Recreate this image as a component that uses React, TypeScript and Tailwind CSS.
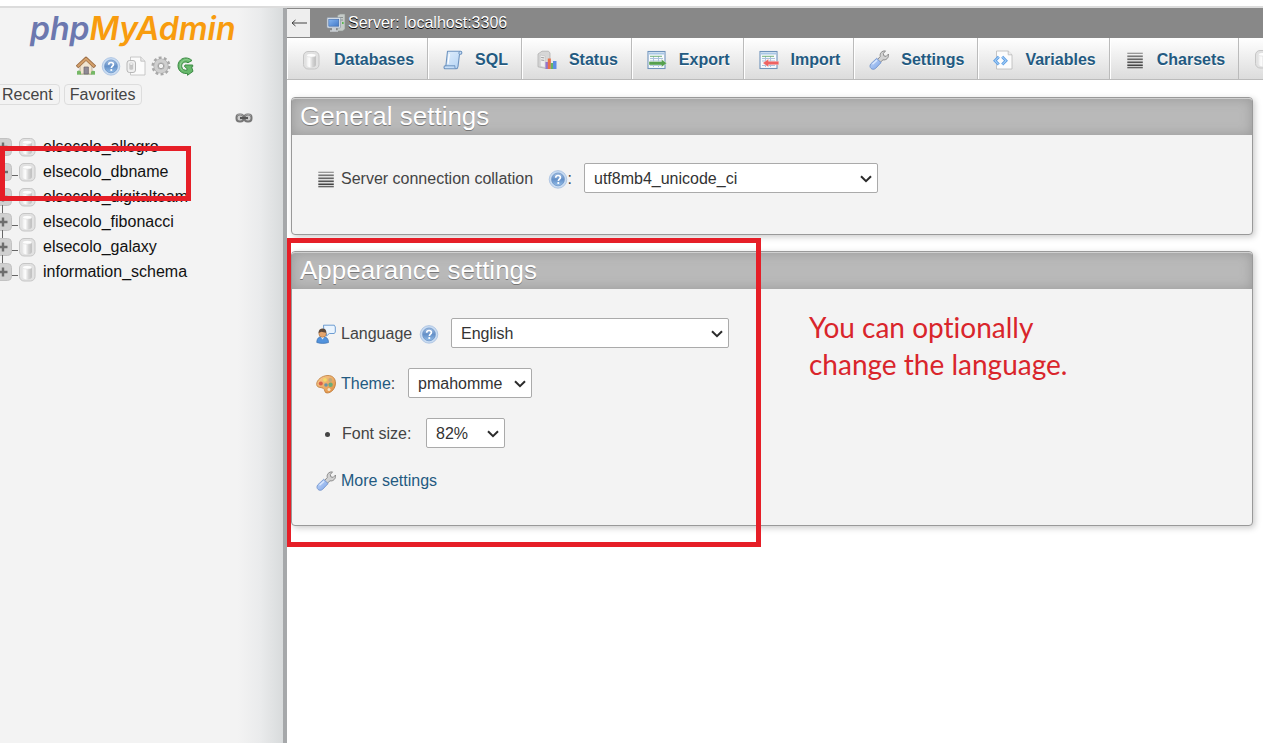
import type { ReactNode, SelectHTMLAttributes } from "react";

function Svg({ children, className = "h-5 w-5" }: { children: ReactNode; className?: string }) {
  return (
    <svg viewBox="0 0 20 20" className={`${className} shrink-0`} fill="none" aria-hidden="true">
      {children}
    </svg>
  );
}

function SharedGradients() {
  return (
    <svg className="absolute h-0 w-0" aria-hidden="true">
      <defs>
        <linearGradient id="cyl" x1="0" x2="1" y1="0" y2="0">
          <stop offset="0" stopColor="#ececec" />
          <stop offset=".3" stopColor="#fdfdfd" />
          <stop offset=".65" stopColor="#d4d4d4" />
          <stop offset="1" stopColor="#bdbdbd" />
        </linearGradient>
        <linearGradient id="helpFill" x1="0" x2="0" y1="0" y2="1">
          <stop offset="0" stopColor="#a3bfe3" />
          <stop offset=".5" stopColor="#6490c8" />
          <stop offset="1" stopColor="#93bde8" />
        </linearGradient>
        <linearGradient id="handle" x1="0" x2="1" y1="0" y2="1">
          <stop offset="0" stopColor="#c3d9fb" />
          <stop offset="1" stopColor="#7ea4e6" />
        </linearGradient>
        <linearGradient id="sheet" x1="0" x2="1" y1="0" y2="1">
          <stop offset="0" stopColor="#e2effc" />
          <stop offset="1" stopColor="#b2d2f4" />
        </linearGradient>
        <linearGradient id="palette" x1="0" x2="1" y1="0" y2="1">
          <stop offset="0" stopColor="#f9cf94" />
          <stop offset="1" stopColor="#e08c3c" />
        </linearGradient>
        <linearGradient id="screen" x1="0" x2="1" y1="0" y2="1">
          <stop offset="0" stopColor="#86b5f0" />
          <stop offset="1" stopColor="#4279c8" />
        </linearGradient>
      </defs>
    </svg>
  );
}

const DatabaseIcon = () => (
  <Svg>
    <rect x="1.500" y="1.500" width="15.500" height="17.500" rx="4.500" fill="#e2e2e2" stroke="#c6c6c6" strokeWidth="1" />
    <path d="M4.500 5.300v9.700c0 1.600 2.200 2.400 4.700 2.400s4.700-.8 4.700-2.400V5.300z" fill="url(#cyl)" />
    <ellipse cx="9.200" cy="5.300" rx="4.700" ry="1.900" fill="#fdfdfd" stroke="#d4d4d4" strokeWidth=".5" />
  </Svg>
);

const HomeIcon = () => (
  <Svg>
    <path d="M1 15.500h18v2.800H1z" fill="#5da356" />
    <path d="M4 9l6-6 6 6v9H4z" fill="#f0e4d0" stroke="#a98e6c" strokeWidth=".6" />
    <path d="M8 11h4.400v7H8z" fill="#8f8a94" stroke="#6b6470" strokeWidth=".7" />
    <path d="M1 11l9-8.500 9 8.500" stroke="#9a6a42" strokeWidth="3.600" strokeLinejoin="round" />
    <path d="M1.600 10.600L10 2.800l8.400 7.800" stroke="#d3a06a" strokeWidth="2" strokeLinejoin="round" />
    <path d="M1 15.500c1.500-1.500 3-1 4 .6v2.400H1zM15 16c1-1.500 3-1.500 4-.5v3h-4z" fill="#76b866" />
  </Svg>
);

const HelpIcon = () => (
  <Svg>
    <circle cx="10" cy="10.400" r="8.800" fill="#c9dcf2" stroke="#9db9dc" strokeWidth=".7" />
    <circle cx="10" cy="10.400" r="6.400" fill="url(#helpFill)" stroke="#6f95c6" strokeWidth=".8" />
    <path d="M7.700 8.700c0-1.500 1.100-2.200 2.400-2.200s2.300.8 2.300 1.900c0 1.700-2 1.700-2 3.500" stroke="#fff" strokeWidth="1.700" />
    <circle cx="10.300" cy="14" r="1.100" fill="#fff" />
  </Svg>
);

const DocsIcon = () => (
  <Svg>
    <path d="M4.500 1h10.300l4.200 4.200V19H4.500z" fill="#fbfbfb" stroke="#bcbcbc" strokeWidth=".8" />
    <path d="M14.800 1v4.200H19" fill="#e8e8e8" stroke="#bcbcbc" strokeWidth=".8" />
    <rect x="1" y="4.500" width="8.500" height="12" rx="2.500" fill="#efefef" stroke="#b0b0b0" strokeWidth=".9" />
    <path d="M3.300 8v4.800c0 1.400 3.900 1.400 3.900 0V8z" fill="#c6c6c6" />
    <ellipse cx="5.250" cy="8" rx="1.950" ry="1" fill="#fff" stroke="#b5b5b5" strokeWidth=".5" />
  </Svg>
);

const GearIcon = () => (
  <Svg>
    <circle cx="10" cy="10" r="8" stroke="#a8a8a8" strokeWidth="3" strokeDasharray="2.800 2.230" />
    <circle cx="10" cy="10" r="5.200" stroke="#ababab" strokeWidth="4.800" />
    <circle cx="10" cy="10" r="5.200" stroke="#cfcfcf" strokeWidth="3.400" />
    <circle cx="10" cy="10" r="2.700" fill="#f3f3f3" stroke="#999" strokeWidth=".9" />
  </Svg>
);

const ReloadIcon = () => (
  <Svg>
    <path d="M16 4.500C12.500 1.200 7.500 1.200 4.500 4 .8 7.500 1.300 13.500 5.500 16.200c2 1.300 4.200 1.500 6 1.200v1.900l5.500-4-1.500-4.600h1.200V9H9l-.5 1.500 2.500 2v1.700c-2.500.5-5-1-5.300-3.700-.4-3.500 3.200-5.500 6.300-3.800z" fill="#67b86b" stroke="#3b8a43" strokeWidth="1" strokeLinejoin="round" />
    <path d="M13.800 4.500c-3-1.500-6.300-1-8.300 1.500-2 2.600-1.600 6.300.8 8.400" stroke="#97d398" strokeWidth="1" />
  </Svg>
);

const ServerIcon = () => (
  <Svg>
    <path d="M11.500 2.500L14 1h5v15l-2.500 2h-5z" fill="#c5cbc8" stroke="#8d9492" strokeWidth=".6" />
    <path d="M13 4.500h4M13 7h4" stroke="#8b9391" />
    <rect x="16" y="9" width="1.600" height="2" fill="#58b84e" />
    <rect x="1" y="4.500" width="13.500" height="10.500" rx="1" fill="#dfe6ee" stroke="#8c98a6" strokeWidth=".7" />
    <rect x="2.800" y="6.200" width="10" height="7" fill="url(#screen)" stroke="#3c64a0" strokeWidth=".6" />
    <path d="M6 15h4v2.200h2v1.600H4v-1.600h2z" fill="#c9ced4" />
  </Svg>
);

const SqlIcon = () => (
  <Svg>
    <path d="M4.500 1.200h13c1.700 0 1.900 2.900 0 3.100H16.500L15 16.500c-.2 1.500-1 2.300-2 2.300H2.300C.6 18.800.6 15.800 2.300 15.800h.6z" fill="url(#sheet)" stroke="#6d93bf" strokeWidth="1.100" strokeLinejoin="round" />
    <path d="M2.300 15.800h9.700c-.4 1.200 0 2.600.9 3M16.500 4.300c-1-.5-.8-2.500.6-3" stroke="#6d93bf" strokeWidth="1" />
    <path d="M6.300 4L5 14" stroke="#fff" strokeWidth="1.200" />
  </Svg>
);

const StatusIcon = () => (
  <Svg>
    <path d="M1 4l4-2.800h6.500L13 3v13.500l-4 2-8-1.700z" fill="#d7d7d7" stroke="#a9a9a9" strokeWidth=".7" />
    <path d="M3.200 5v11.500l5 1V6z" fill="#efefef" stroke="#b8b8b8" strokeWidth=".5" />
    <path d="M4.200 7.500l3 .4M4.200 10l3 .4" stroke="#9a9a9a" />
    <rect x="8.500" y="12" width="3" height="7" fill="#9474cc" />
    <rect x="10.800" y="8.500" width="3" height="10.500" fill="#ea7049" />
    <rect x="13.800" y="13" width="2.700" height="6" fill="#64b665" />
    <rect x="16" y="11" width="3.500" height="8" fill="#5d8de4" />
  </Svg>
);

const TableBase = () => (
  <>
    <rect x="1" y="1.500" width="17" height="17" fill="#f7fafd" stroke="#6f93bb" strokeWidth="1.100" />
    <path d="M1.500 3.500h16" stroke="#a9c7e5" strokeWidth="2" />
    <path d="M3 8.500h13M3 11h13M3 15.500h13M6.500 6v11M11.500 6v11" stroke="#abc2dc" strokeWidth="1" />
    <path d="M3 6.300h12" stroke="#74b278" strokeWidth="1" />
  </>
);

const ExportIcon = () => (
  <Svg>
    <TableBase />
    <path d="M2 11.500h12.500V9.300l5.300 3.900-5.300 3.900v-2.100H2z" fill="#55a04e" stroke="#f2f8f1" strokeWidth=".4" />
  </Svg>
);

const ImportIcon = () => (
  <Svg>
    <TableBase />
    <path d="M19.800 11.300H9.500V9l-5.700 4 5.700 4v-2.300h10.300z" fill="#ee6262" stroke="#fbe8e8" strokeWidth=".4" />
  </Svg>
);

const WrenchIcon = () => (
  <Svg>
    <path d="M8.500 9.500l2.800-3C10.500 3.300 12.800.6 16.500.9L14.300 3.500l.6 2.400 2.300.5L19.500 4c.6 3.800-2.400 6.500-5.500 5.800l-3.200 3z" fill="#d2d2d2" stroke="#8b8b8b" strokeWidth="1" strokeLinejoin="round" />
    <path d="M7.700 8.300l4.400 4.300-5.400 5.700c-3.200 3-7.700-1.200-4.800-4.600z" fill="url(#handle)" stroke="#6b8dc8" strokeWidth=".8" />
    <path d="M3.500 14.300l4.500-4" stroke="#dbe8fd" strokeWidth="1.500" />
  </Svg>
);

const VariablesIcon = () => (
  <Svg>
    <path d="M3.500 1h11.700L19 4.800V19H3.500z" fill="#fcfcfc" stroke="#b9b9b9" strokeWidth=".8" />
    <path d="M15.200 1v3.800H19" fill="#eee" stroke="#b9b9b9" strokeWidth=".8" />
    <path d="M5.800 6.800L2 10.700l3.800 3.900M9.200 6.800l3.800 3.900-3.800 3.900" stroke="#5b9ce2" strokeWidth="2.800" />
    <path d="M5.800 6.800L2 10.700l3.800 3.900M9.200 6.800l3.800 3.900-3.800 3.900" stroke="#a3cdf6" strokeWidth="1.100" />
  </Svg>
);

const CharsetIcon = () => (
  <Svg>
    <path d="M2.300 3.300h15.500" stroke="#8f8f8f" strokeWidth="1.200" />
    <path d="M2.300 6.300h15.500" stroke="#777" strokeWidth="1.700" />
    <path d="M2.300 9.300h15.500" stroke="#666" strokeWidth="1.700" />
    <path d="M2.300 12.300h15.500" stroke="#555" strokeWidth="1.700" />
    <path d="M2.300 15.300h15.500" stroke="#444" strokeWidth="1.700" />
    <path d="M2.300 17.700h15.500" stroke="#555" strokeWidth="1.200" />
  </Svg>
);

const LanguageIcon = () => (
  <Svg>
    <path d="M7.500 1.200h10.800L19.300 3v5l-1 1.500h-5L10.500 12V9.500H8z" fill="#eaf4fe" stroke="#5f93cd" strokeWidth=".9" />
    <path d="M.8 18.500c0-4 2-6 5.700-6s6 2 6 6c-3.500 1.200-8 1.200-11.700 0z" fill="#5293dd" stroke="#3a6fae" strokeWidth=".7" />
    <path d="M4.500 12.500l2 3 2.200-3z" fill="#e6f0fb" />
    <circle cx="6.500" cy="9.500" r="3.700" fill="#e5a56d" stroke="#9a6437" strokeWidth=".5" />
    <path d="M2.500 9c0-3.200 1.900-4.500 4.200-4.500 2.200 0 3.800 1.500 3.700 4.300C8.200 8.300 6.700 7.800 5.500 7.700z" fill="#5a473a" />
  </Svg>
);

const ThemeIcon = () => (
  <Svg>
    <path d="M12 1.500c5 0 7.500 3.300 7.500 7.500 0 5.500-4 10-8.500 10-3 0-1.500-3.500-4-4.800C4.500 13 1 14 .7 10.500.4 6 6 1.500 12 1.500z" fill="url(#palette)" stroke="#bd7a39" strokeWidth=".8" />
    <circle cx="4.800" cy="9.500" r="2" fill="#d9604a" />
    <circle cx="9" cy="5.800" r="1.900" fill="#f1dc67" />
    <circle cx="14.300" cy="6" r="1.900" fill="#c2a97a" />
    <circle cx="10" cy="11" r="1.800" fill="#6a93a8" />
    <circle cx="14.600" cy="10.800" r="2.200" fill="#6bab79" />
    <circle cx="13" cy="15.500" r="1.500" fill="#f7e3c5" />
  </Svg>
);

const LinkIcon = () => (
  <svg viewBox="0 0 18 10" className="h-2.5 w-[18px]" fill="none" aria-hidden="true">
    <rect x="1.500" y="1.500" width="7" height="7" rx="3" fill="#ccc" stroke="#777" strokeWidth="2" />
    <rect x="9.500" y="1.500" width="7" height="7" rx="3" fill="#ccc" stroke="#777" strokeWidth="2" />
    <path d="M5 5h8" stroke="#555" strokeWidth="2.200" />
    <path d="M2 2.500C3 1 6 1 8 2.500M10 2.500c1-1.500 4-1.500 6 0" stroke="#b5b5b5" strokeWidth=".7" />
  </svg>
);

const ExpandIcon = ({ open }: { open: boolean }) => (
  <svg viewBox="0 0 18 18" className="h-[18px] w-[18px]" fill="none" aria-hidden="true">
    <rect x=".5" y=".5" width="17" height="17" rx="4" fill="#d0d0d0" stroke="#c2c2c2" />
    <path d={open ? "M4 9h10" : "M4.500 9h9M9 4.500v9"} stroke="#6e6e6e" strokeWidth="2.400" />
  </svg>
);

const databases = [
  "elsecolo_allegro",
  "elsecolo_dbname",
  "elsecolo_digitalteam",
  "elsecolo_fibonacci",
  "elsecolo_galaxy",
  "information_schema",
];

const shortcuts = [
  { label: "Home", icon: <HomeIcon /> },
  { label: "Documentation", icon: <HelpIcon /> },
  { label: "MySQL documentation", icon: <DocsIcon /> },
  { label: "Navigation settings", icon: <GearIcon /> },
  { label: "Reload", icon: <ReloadIcon /> },
];

const tabs = [
  { label: "Databases", icon: <DatabaseIcon /> },
  { label: "SQL", icon: <SqlIcon /> },
  { label: "Status", icon: <StatusIcon /> },
  { label: "Export", icon: <ExportIcon /> },
  { label: "Import", icon: <ImportIcon /> },
  { label: "Settings", icon: <WrenchIcon /> },
  { label: "Variables", icon: <VariablesIcon /> },
  { label: "Charsets", icon: <CharsetIcon /> },
];

function Sidebar() {
  return (
    <aside className="w-[287px] shrink-0 border-r-4 border-[#a6a8aa] bg-[linear-gradient(to_right,#f3f3f3_84%,#eaebec_92%,#d8dbdc)]">
      <a href="#home" className="ml-[30px] block h-[46px] font-['Inter',sans-serif] text-[32px] leading-[42px] font-semibold italic">
        <span className="text-[#6c78af]">php</span>
        <span className="text-[#f89c0e]">MyAdmin</span>
      </a>
      <nav className="ml-[76px] flex gap-[5px] pt-0.5">
        {shortcuts.map((s) => (
          <a key={s.label} href="#nav" aria-label={s.label}>
            {s.icon}
          </a>
        ))}
      </nav>
      <div className="mt-2 flex gap-1 text-[#444]">
        <button className="-ml-1 rounded border border-[#ddd] pt-px pr-1.5 pl-[5px] leading-[18px]">Recent</button>
        <button className="rounded border border-[#ddd] px-[5px] pt-px leading-[18px]">Favorites</button>
      </div>
      <div className="flex h-[29px] pt-2 pl-[235px]">
        <button aria-label="Unlink from main panel" className="h-2.5">
          <LinkIcon />
        </button>
      </div>
      <ul className="relative text-[#111]">
        {databases.map((name, i) => (
          <li key={name} className="relative flex h-[25px] items-center">
            {i > 0 && <span className="absolute -top-1 left-0.5 h-2 w-px bg-[#666]" />}
            <button aria-label={`Expand ${name}`} className="relative -ml-1.5 shrink-0">
              <ExpandIcon open={i === 1} />
            </button>
            <span className="mt-2 h-px w-1.5 bg-[#666]" />
            <a href="#db" className="flex items-center gap-[5px]">
              <DatabaseIcon />
              {name}
            </a>
          </li>
        ))}
        <li aria-hidden="true" className="pointer-events-none absolute top-3 left-0 h-[55px] w-[191px] border-5 border-[#e61e27]" />
      </ul>
    </aside>
  );
}

function Select({ value, className, ...rest }: { value: string; className: string } & SelectHTMLAttributes<HTMLSelectElement>) {
  return (
    <span className={`relative block ${className}`}>
      <select
        {...rest}
        defaultValue={value}
        className="h-[30px] w-full appearance-none rounded-[2px] border border-[#aaa] bg-white pt-0.5 pl-[9px] text-base text-[#333]"
      >
        <option>{value}</option>
      </select>
      <svg viewBox="0 0 12 8" className="pointer-events-none absolute top-3 right-1.5 h-2 w-3" fill="none" aria-hidden="true">
        <path d="M1 1.200l5 5 5-5" stroke="#2b2b2b" strokeWidth="2" />
      </svg>
    </span>
  );
}

function Panel({ title, children }: { title: string; children: ReactNode }) {
  return (
    <section className="relative rounded border border-[#999] bg-[#f3f3f3] shadow-[2px_2px_6px_#ccc]">
      <h2 className="rounded-t-[3px] border-t border-[#d0d0d0] bg-[#b9b9b9] pb-0.5 pl-2 text-[26px] leading-[34px] text-white shadow-[inset_0_0_12px_#999] [text-shadow:0_1px_0_#777]">
        {title}
      </h2>
      {children}
    </section>
  );
}

export default function App() {
  return (
    <div className="flex min-h-screen flex-col overflow-x-hidden bg-white font-['Liberation_Sans',Arial,sans-serif] text-base text-[#444]">
      <SharedGradients />
      <div className="h-2 border-b-2 border-[#dcdcdc]" />
      <div className="flex grow">
        <Sidebar />
        <main className="min-w-0 grow overflow-hidden">
          <header className="flex h-[30px] items-center bg-[#888] text-white">
            <button aria-label="Hide panel" className="flex h-7 w-[23px] items-center justify-center bg-[#eee]">
              <svg viewBox="0 0 16 8" className="h-2 w-4" fill="none" aria-hidden="true">
                <path d="M1 4h15M4.500 1L1 4l3.500 3" stroke="#444" />
              </svg>
            </button>
            <a href="#server" className="ml-4 flex items-center gap-0.5 [text-shadow:0_1px_0_#000]">
              <ServerIcon />
              Server: localhost:3306
            </a>
          </header>
          <nav className="flex h-[42px] overflow-hidden border-b border-[#bbb] bg-linear-to-b from-white to-[#dcdcdc]">
            {tabs.map((t) => (
              <a
                key={t.label}
                href="#tab"
                className="flex shrink-0 items-center gap-3 border-r border-[#bbb] pt-0.5 pr-[13px] pl-[15px] font-bold text-[#235a81] shadow-[inset_1px_0_0_#fff] [text-shadow:0_1px_0_#fff]"
              >
                {t.icon}
                {t.label}
              </a>
            ))}
            <a href="#engines" aria-label="Engines" className="flex shrink-0 items-center pl-[15px]">
              <DatabaseIcon />
            </a>
          </nav>

          <div className="flex flex-col gap-4 pt-[17px] pr-2.5 pl-1">
            <Panel title="General settings">
              <div className="flex items-center px-6 pt-[28px] pb-[41px]">
                <label htmlFor="collation" className="flex w-[268px] shrink-0 items-center pt-0.5">
                  <CharsetIcon />
                  <span className="ml-[5px] grow">Server connection collation</span>
                  <HelpIcon />
                  <span className="mr-3">:</span>
                </label>
                <Select id="collation" value="utf8mb4_unicode_ci" className="w-[294px]" />
              </div>
            </Panel>

            <Panel title="Appearance settings">
              <div className="flex flex-col gap-5 px-6 pt-[29px] pb-[33px]">
                <div className="flex items-center">
                  <label htmlFor="lang" className="flex w-[135px] items-center pt-0.5">
                    <LanguageIcon />
                    <span className="ml-[5px] grow">Language</span>
                    <span className="mr-3">
                      <HelpIcon />
                    </span>
                  </label>
                  <Select id="lang" value="English" className="w-[278px]" />
                </div>
                <div className="flex items-center">
                  <label htmlFor="theme" className="flex w-[92px] items-center gap-[5px] pt-0.5">
                    <ThemeIcon />
                    <span>
                      <a href="#themes" className="text-[#235a81]">Theme</a>:
                    </span>
                  </label>
                  <Select id="theme" value="pmahomme" className="w-[124px]" />
                </div>
                <div className="flex items-center">
                  <label htmlFor="fontsize" className="flex w-[110px] items-center gap-3 pt-0.5 pl-[9px]">
                    <span className="h-[5px] w-[5px] rounded-full bg-[#444]" />
                    Font size:
                  </label>
                  <Select id="fontsize" value="82%" className="w-[79px]" />
                </div>
                <a href="#settings" className="flex h-6 items-center gap-[5px] pt-0.5 text-[#235a81]">
                  <WrenchIcon />
                  More settings
                </a>
              </div>
              <div aria-hidden="true" className="pointer-events-none absolute -top-3.5 -left-1.5 h-[309px] w-[475px] border-5 border-[#e61e27]" />
              <p className="absolute top-[57px] left-[517px] font-['Lato',sans-serif] text-[28px] leading-[37px] text-[#d9252b] [font-variant-ligatures:none]">
                You can optionally
                <br />
                change the language.
              </p>
            </Panel>
          </div>
        </main>
      </div>
    </div>
  );
}
